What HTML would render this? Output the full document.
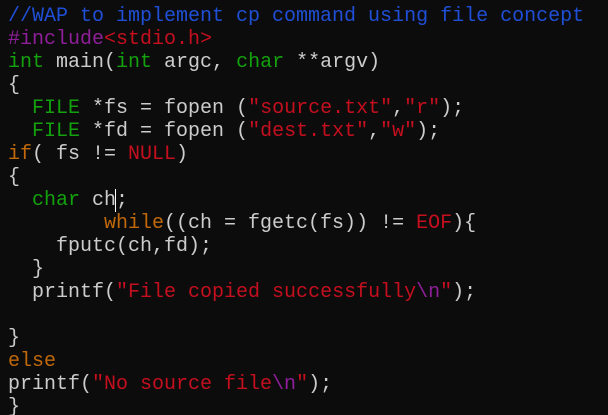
<!DOCTYPE html>
<html><head><style>
html,body{margin:0;padding:0;background:#0c0c0c;width:608px;height:415px;overflow:hidden}
pre{margin:0;padding:5px 0 0 8px;font-family:"Liberation Mono",monospace;font-size:20px;line-height:23px;color:#cccccc;white-space:pre}
.c{color:#1f4fd6}.p{color:#8f1e9a}.r{color:#c50f1f}.g{color:#13a10e}.o{color:#c1680a}
.cur{border-left:1px solid #fff;margin-left:-1px}
</style></head><body><pre><span class="c">//WAP to implement cp command using file concept</span>
<span class="p">#include</span><span class="r">&lt;stdio.h&gt;</span>
<span class="g">int</span> main(<span class="g">int</span> argc, <span class="g">char</span> **argv)
{
  <span class="g">FILE</span> *fs = fopen (<span class="r">"source.txt"</span>,<span class="r">"r"</span>);
  <span class="g">FILE</span> *fd = fopen (<span class="r">"dest.txt"</span>,<span class="r">"w"</span>);
<span class="o">if</span>( fs != <span class="r">NULL</span>)
{
  <span class="g">char</span> ch<span class="cur"></span>;
        <span class="o">while</span>((ch = fgetc(fs)) != <span class="r">EOF</span>){
    fputc(ch,fd);
  }
  printf(<span class="r">"File copied successfully</span><span class="p">\n</span><span class="r">"</span>);

}
<span class="o">else</span>
printf(<span class="r">"No source file</span><span class="p">\n</span><span class="r">"</span>);
}</pre></body></html>
